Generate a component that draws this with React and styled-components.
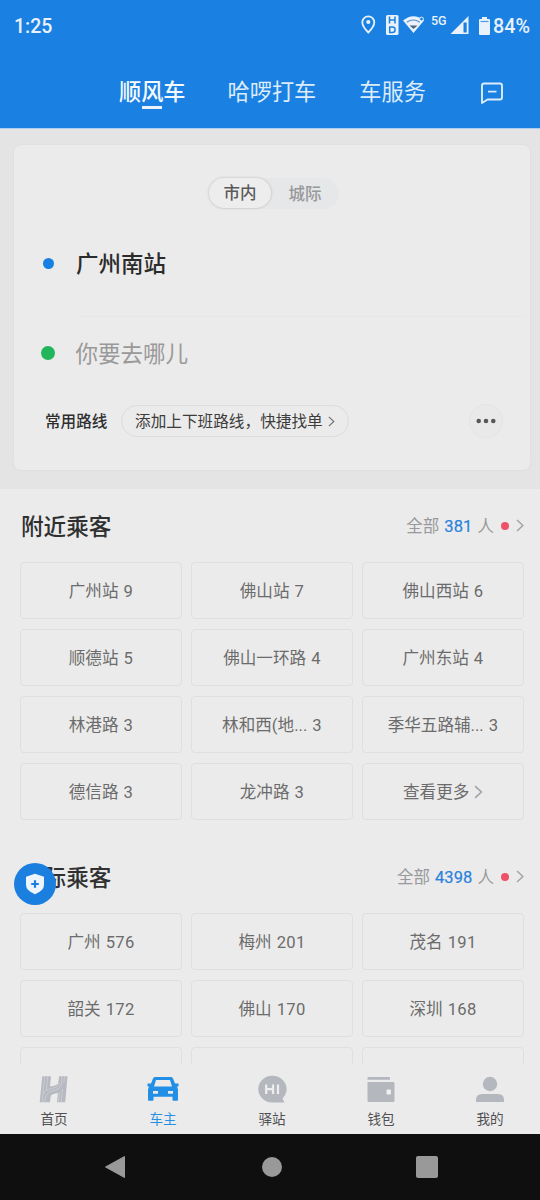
import styled, { createGlobalStyle } from "styled-components";

const nearby = [
  ["广州站", 9], ["佛山站", 7], ["佛山西站", 6],
  ["顺德站", 5], ["佛山一环路", 4], ["广州东站", 4],
  ["林港路", 3], ["林和西(地...", 3], ["季华五路辅...", 3],
  ["德信路", 3], ["龙冲路", 3],
];

const intercity = [
  ["广州", 576], ["梅州", 201], ["茂名", 191],
  ["韶关", 172], ["佛山", 170], ["深圳", 168],
  [], [], [],
];

function Chevron({ size = 12, color = "#a4a4a6" }) {
  return (
    <svg width={size * 0.62} height={size} viewBox="0 0 8 13" fill="none">
      <path d="M1 1l5.8 5.5L1 12" stroke={color} strokeWidth="1.5" />
    </svg>
  );
}

function StatusIcons() {
  return (
    <svg width="118" height="24" viewBox="360 14 118 24" fill="#e9f2fc">
      <path
        d="M368.3 16.3a6 6 0 0 0-6 6c0 4.2 6 10.2 6 10.2s6-6 6-10.2a6 6 0 0 0-6-6z"
        fill="none"
        stroke="#e9f2fc"
        strokeWidth="1.8"
      />
      <circle cx="368.3" cy="22" r="2.1" />
      <rect x="386" y="15" width="12.5" height="20" rx="1.5" />
      <path
        d="M389.5 16.5v7M395 16.5v7M389.5 20h5.5M389.7 27v5.5h2.6q2.8 0 2.8-2.8t-2.8-2.7z"
        fill="none"
        stroke="#1a80e2"
        strokeWidth="1.5"
      />
      <path d="M403 20.500q10.500-8.500 21 0L413.500 33z" />
      <path d="M406.800 22.300q6.700-4.500 13 0" fill="none" stroke="#5f8fbd" strokeWidth="1.100" />
      <path d="M409.500 25.500h8L413.500 29z" fill="#536678" />
      <circle cx="421.500" cy="19" r="1.900" fill="#1a80e2" stroke="#e9f2fc" />
      <path d="M468.500 16v18h-18z" />
      <path d="M463.500 22.500h3.200v10h-3.200z" fill="#1a80e2" />
    </svg>
  );
}

function MessageIcon() {
  return (
    <svg width="24" height="24" viewBox="0 0 24 24" fill="none" stroke="#dcecfb" strokeWidth="1.900">
      <path d="M4 2.500h16q2 0 2 2v12q0 2-2 2H7.500L2 22V4.500q0-2 2-2z" strokeLinejoin="round" />
      <path d="M8 10.600h8.500" strokeWidth="1.700" />
    </svg>
  );
}

function HomeIcon() {
  return (
    <svg width="32" height="28" viewBox="0 0 32 28">
      <path d="M4.300 1.300h8.700l-1 10.200q4.500-.3 8-2.500l1.200-7.700h8.300l-2.300 26h-8.200l.9-9.300q-4 .2-7 2.300l-1 7H1.700z" fill="#b6b9c0" />
      <path
        d="M6.700 1L4.200 27.500M9.700 1L8.300 15M26.500 1l-.7 7M24.500 14l-1.300 13.500M21.500 17l-1 10.500"
        fill="none"
        stroke="#d3d5da"
        strokeWidth=".7"
      />
      <path
        d="M6.700 27.500q.3-10 7.300-11.500 9-1.500 9.800-8V1M5.300 19q2.500-4.500 8-5.500 7-1 8.500-5.500"
        fill="none"
        stroke="#d3d5da"
        strokeWidth=".7"
      />
    </svg>
  );
}

function CarIcon() {
  return (
    <svg width="32" height="28" viewBox="0 0 32 28">
      <path
        d="M8 2h16q1.500 0 2 1.500L28 8.500h3.500v3H30l1 3v10.300q0 1-1 1h-3.500q-1 0-1-1v-3h-19v3q0 1-1 1H2q-1 0-1-1V14.500l1-3H.5v-3H4l2-5Q6.500 2 8 2z"
        fill="#208fe5"
      />
      <path d="M9 5h14l2 6.500H7zM6 16h5v2.800H6zM21 16h5v2.800h-5z" fill="#ebebeb" />
    </svg>
  );
}

function StationIcon() {
  return (
    <svg width="32" height="28" viewBox="0 0 32 28">
      <path d="M16 .8a13.700 13.300 0 1 0 0 26.600h12.500l-2-3.800A13.700 13.300 0 0 0 16 .8z" fill="#b5b7be" />
      <path d="M10.200 9.500v9.500M17 9.500v9.500M10.200 14.200H17M22 9.500v9.500" stroke="#eeeef0" strokeWidth="2.200" />
    </svg>
  );
}

function WalletIcon() {
  return (
    <svg width="32" height="28" viewBox="0 0 32 28" fill="#b5b7be">
      <path d="M3.500 2H24q1 0 1 1v1.800H2.500V3q0-1 1-1zM2.500 7H28q1.500 0 1.500 1.500v17q0 1.500-1.500 1.500H4q-1.500 0-1.500-1.500z" />
      <rect x="21.500" y="14.500" width="4.500" height="5" rx="1" fill="#f0f0f1" />
    </svg>
  );
}

function MineIcon() {
  return (
    <svg width="32" height="28" viewBox="0 0 32 28" fill="#b5b7be">
      <circle cx="16" cy="9" r="7.200" />
      <path d="M8 19h16q6 0 6 6v2H2v-2q0-6 6-6z" />
    </svg>
  );
}

const tabs = [
  { label: "首页", icon: HomeIcon },
  { label: "车主", icon: CarIcon, active: true },
  { label: "驿站", icon: StationIcon },
  { label: "钱包", icon: WalletIcon },
  { label: "我的", icon: MineIcon },
];

function Passengers({ title, count, places, more, gap }) {
  return (
    <Section $gap={gap}>
      <SectionHead>
        <SectionTitle>{title}</SectionTitle>
        <AllLink>
          <AllText>全部</AllText>
          <Count>{count}</Count>
          <AllText>人</AllText>
          <RedDot />
          <Chevron size={13} />
        </AllLink>
      </SectionHead>
      <PlaceGrid>
        {places.map(([name, total], i) => (
          <Place key={i}>
            <span>{name}</span>
            <Total>{total}</Total>
          </Place>
        ))}
        {more && (
          <Place>
            查看更多
            <Chevron size={14} />
          </Place>
        )}
      </PlaceGrid>
    </Section>
  );
}

export default function App() {
  return (
    <Screen>
      <GlobalStyle />
      <Header>
        <StatusBar>
          <Clock>1:25</Clock>
          <StatusRight>
            <StatusIcons />
            <Network>5G</Network>
            <svg width="13" height="20" viewBox="0 0 13 20" fill="#e9f2fc">
              <path d="M4 1h5v2h2q1 0 1 1v14q0 1-1 1H2q-1 0-1-1V4q0-1 1-1h2z" />
              <path d="M2.500 5.500h8" stroke="#4f9be6" strokeWidth="1.200" />
            </svg>
            <Battery>84%</Battery>
          </StatusRight>
        </StatusBar>
        <TopTabs>
          <TopTab $active>顺风车</TopTab>
          <TopTab>哈啰打车</TopTab>
          <TopTab>车服务</TopTab>
          <MessageButton>
            <MessageIcon />
          </MessageButton>
        </TopTabs>
      </Header>

      <Content>
        <Card>
          <Toggle>
            <ToggleItem $active>市内</ToggleItem>
            <ToggleItem>城际</ToggleItem>
          </Toggle>
          <RouteRow $divider>
            <Dot $color="#1880e3" $size={11} />
            <Origin>广州南站</Origin>
          </RouteRow>
          <RouteRow>
            <Dot $color="#21b65c" $size={14} />
            <Destination>你要去哪儿</Destination>
          </RouteRow>
          <CommonRoutes>
            <CommonLabel>常用路线</CommonLabel>
            <AddRoute>
              <AddText>添加上下班路线，快捷找单</AddText>
              <Chevron size={11} color="#77777a" />
            </AddRoute>
            <MoreButton>
              <svg width="20" height="6" viewBox="0 0 20 6" fill="#58585a">
                <circle cx="2.700" cy="3" r="2.300" />
                <circle cx="10" cy="3" r="2.300" />
                <circle cx="17.300" cy="3" r="2.300" />
              </svg>
            </MoreButton>
          </CommonRoutes>
        </Card>
        <Passengers title="附近乘客" count="381" places={nearby} more gap={20} />
        <Passengers title="城际乘客" count="4398" places={intercity} gap={0} />
      </Content>

      <SafetyButton>
        <svg width="20" height="22" viewBox="0 0 20 22">
          <path d="M10 .8l9 3v8q0 6-9 9.400Q1 17.800 1 11.800v-8z" fill="#eef4fb" />
          <path d="M10 7.200v7.600M6.200 11h7.600" stroke="#1a7fdf" strokeWidth="2.200" />
        </svg>
      </SafetyButton>

      <TabBar>
        {tabs.map(({ label, icon: Icon, active }) => (
          <TabItem key={label} $active={active}>
            <Icon />
            {label}
          </TabItem>
        ))}
      </TabBar>
      <SystemNav>
        <svg width="22" height="24" viewBox="0 0 22 24">
          <path d="M20.500 1.500v21L1.500 12z" fill="#999" stroke="#999" strokeLinejoin="round" />
        </svg>
        <HomeKey />
        <RecentKey />
      </SystemNav>
    </Screen>
  );
}

const GlobalStyle = createGlobalStyle`
  * {
    box-sizing: border-box;
  }

  body {
    margin: 0;
    background: #0f0f0f;
  }
`;

const Screen = styled.div`
  position: relative;
  display: flex;
  flex-direction: column;
  width: 540px;
  height: 1200px;
  overflow: hidden;
  background: #e4e4e4;
  font-family: Roboto, "Noto Sans CJK SC", sans-serif;

  svg {
    display: block;
    flex: none;
  }
`;

const Header = styled.header`
  flex: none;
  height: 129px;
  background: #1a80e2;
  border-bottom: 1px solid #a9cdf3;
`;

const StatusBar = styled.div`
  display: flex;
  justify-content: space-between;
  height: 52px;
  padding: 0 9px 0 14px;
  color: #e9f2fc;
`;

const Clock = styled.span`
  font-size: 19.5px;
  font-weight: 500;
  line-height: 53px;
`;

const StatusRight = styled.div`
  position: relative;
  display: flex;
  align-items: center;
`;

const Network = styled.span`
  position: absolute;
  left: 71px;
  top: 13px;
  font-size: 12.5px;
  font-weight: 500;
  line-height: 16px;
`;

const Battery = styled.span`
  width: 38px;
  margin-left: 2px;
  font-size: 19.7px;
  font-weight: 500;
  line-height: 53px;
`;

const TopTabs = styled.nav`
  display: flex;
  align-items: center;
  height: 76px;
  padding: 3px 36px 0 119px;
`;

const TopTab = styled.div`
  position: relative;
  height: 34px;
  margin-right: ${({ $active }) => ($active ? "42px" : "43px")};
  color: ${({ $active }) => ($active ? "#f4f9fe" : "#dcecfb")};
  font-size: 22.2px;
  font-weight: ${({ $active }) => ($active ? 500 : 400)};
  line-height: 34px;
  white-space: nowrap;

  &::after {
    content: "";
    display: ${({ $active }) => ($active ? "block" : "none")};
    position: absolute;
    left: 23px;
    bottom: 0;
    width: 20px;
    height: 2.5px;
    background: #eaf3fc;
  }
`;

const MessageButton = styled.div`
  margin: 2px 0 0 auto;
`;

const Content = styled.main`
  flex: none;
  height: 935px;
  padding-top: 16px;
  overflow: hidden;
`;

const Card = styled.section`
  height: 325px;
  margin: 0 10px 19px 14px;
  padding-top: 33px;
  border-radius: 7px;
  background: #ebebeb;
  box-shadow: 0 0 3px rgba(0, 0, 0, 0.05);
`;

const Toggle = styled.div`
  display: flex;
  width: 130px;
  height: 31px;
  margin-left: 195px;
  border-radius: 16px;
  background: #e6e7e9;
`;

const ToggleItem = styled.div`
  width: ${({ $active }) => ($active ? "62px" : "68px")};
  height: ${({ $active }) => ($active ? "30px" : "31px")};
  border-radius: 16px;
  background: ${({ $active }) => ($active ? "#ededed" : "transparent")};
  box-shadow: ${({ $active }) => ($active ? "0 0 2px 1px rgba(0, 0, 0, 0.1)" : "none")};
  color: ${({ $active }) => ($active ? "#5a5a5b" : "#97989a")};
  font-size: 16.5px;
  font-weight: 500;
  line-height: ${({ $active }) => ($active ? "32px" : "34px")};
  text-align: center;
`;

const RouteRow = styled.div`
  display: flex;
  align-items: center;
  position: relative;
  height: ${({ $divider }) => ($divider ? "108px" : "72px")};
  padding-left: 27px;

  &::after {
    content: "";
    display: ${({ $divider }) => ($divider ? "block" : "none")};
    position: absolute;
    left: 64px;
    right: 4px;
    bottom: 0;
    height: 1px;
    background: #e7e7e7;
  }
`;

const Dot = styled.span`
  width: ${({ $size }) => $size}px;
  height: ${({ $size }) => $size}px;
  margin: 0 ${({ $size }) => (14 - $size) / 2}px;
  border-radius: 50%;
  background: ${({ $color }) => $color};
`;

const Origin = styled.span`
  margin: 0 0 2px 21px;
  color: #2b2b2c;
  font-size: 22.5px;
  font-weight: 500;
`;

const Destination = styled.span`
  margin: 0 0 2px 20.5px;
  color: #999;
  font-size: 22.5px;
`;

const CommonRoutes = styled.div`
  display: flex;
  align-items: center;
  height: 34px;
  margin-top: 15px;
  padding: 0 27px 0 31px;
`;

const CommonLabel = styled.span`
  width: 76px;
  margin-bottom: 2px;
  color: #2f2f30;
  font-size: 15.6px;
  font-weight: 500;
`;

const AddRoute = styled.div`
  display: flex;
  align-items: center;
  gap: 5px;
  width: 228px;
  height: 32px;
  padding-left: 13px;
  border: 1px solid #dcdcdd;
  border-radius: 16px;
  color: #3c3c3d;
  font-size: 15.65px;
  white-space: nowrap;
`;

const AddText = styled.span`
  margin-bottom: 2px;
`;

const MoreButton = styled.div`
  display: flex;
  align-items: center;
  justify-content: center;
  width: 34px;
  height: 34px;
  margin-left: auto;
  border: 1px solid #e4e4e4;
  border-radius: 50%;
  background: #e9e9e9;
`;

const Section = styled.section`
  padding: 0 16px ${({ $gap }) => $gap}px 20px;
  background: #ebebeb;
`;

const SectionHead = styled.div`
  display: flex;
  align-items: center;
  justify-content: space-between;
  height: 73px;
  padding-left: 1px;
`;

const SectionTitle = styled.h2`
  margin: 0;
  padding-top: 4px;
  color: #303031;
  font-size: 22.6px;
  font-weight: 500;
  line-height: 33px;
`;

const AllLink = styled.div`
  display: flex;
  align-items: center;
  color: #99999b;
  font-size: 16.5px;
  line-height: 24px;
`;

const AllText = styled.span`
  padding-top: 2px;
`;

const Count = styled.span`
  margin: 2px 5px 0 5px;
  color: #2c82db;
  letter-spacing: 0.1px;
  -webkit-text-stroke: 0.2px #2c82db;
`;

const RedDot = styled.span`
  width: 8px;
  height: 8px;
  margin: 0 7px;
  border-radius: 50%;
  background: #ee5268;
`;

const PlaceGrid = styled.div`
  display: grid;
  grid-template-columns: repeat(3, 1fr);
  grid-auto-rows: 57px;
  gap: 10px 9px;
`;

const Place = styled.div`
  display: flex;
  align-items: center;
  justify-content: center;
  gap: 5px;
  padding-top: 3px;
  border: 1px solid #dfdfe0;
  border-radius: 4px;
  color: #6b6b6c;
  font-size: 16.6px;
  line-height: 24px;
  white-space: nowrap;

  svg {
    margin-bottom: 3px;
  }
`;

const Total = styled.span`
  letter-spacing: 0.3px;
`;

const SafetyButton = styled.div`
  position: absolute;
  left: 14px;
  top: 863px;
  display: flex;
  align-items: center;
  justify-content: center;
  width: 42px;
  height: 42px;
  border-radius: 50%;
  background: #1a7fdf;
`;

const TabBar = styled.nav`
  display: flex;
  flex: none;
  height: 70px;
  background: #ebebeb;
`;

const TabItem = styled.div`
  display: flex;
  flex: none;
  flex-direction: column;
  align-items: center;
  gap: 6px;
  width: 109px;
  padding: 11px 1px 0 0;
  color: ${({ $active }) => ($active ? "#2790e4" : "#505053")};
  font-size: 13.6px;
  line-height: 21px;
`;

const SystemNav = styled.div`
  display: flex;
  align-items: center;
  justify-content: space-between;
  height: 66px;
  padding: 0 102px 0 104px;
  background: #0f0f0f;
`;

const HomeKey = styled.span`
  width: 20px;
  height: 20px;
  margin-left: 2px;
  border-radius: 50%;
  background: #999;
`;

const RecentKey = styled.span`
  width: 22px;
  height: 22px;
  border-radius: 2px;
  background: #999;
`;
